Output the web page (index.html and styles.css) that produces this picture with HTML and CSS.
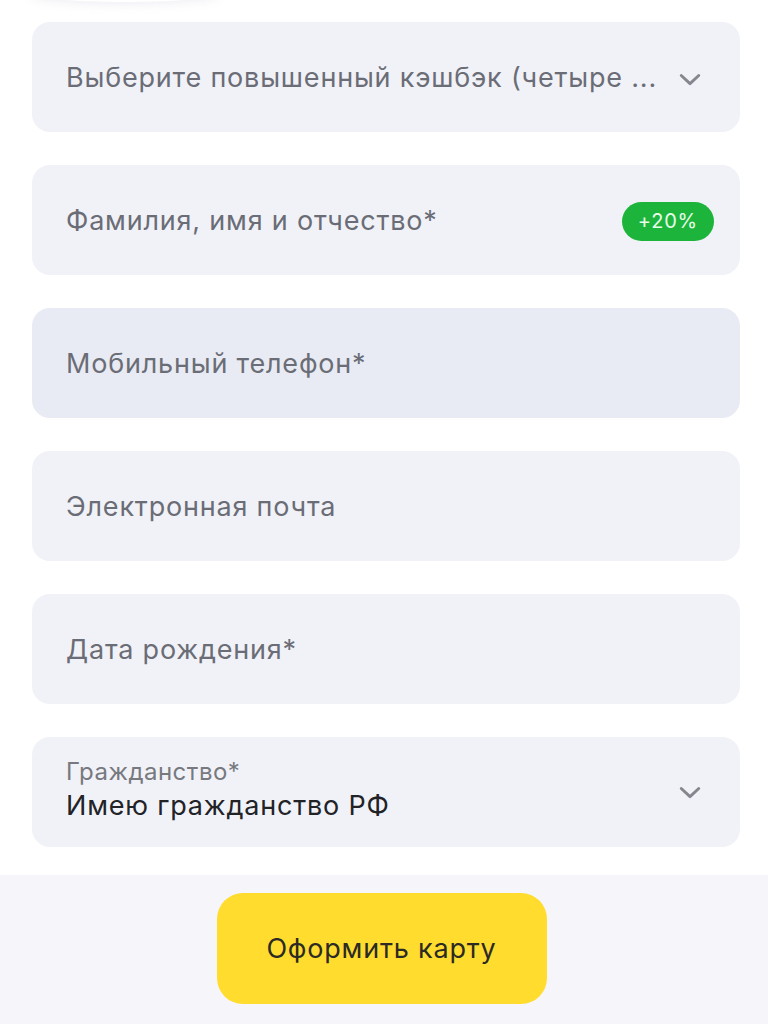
FILE: index.html
```html
<!DOCTYPE html>
<html lang="ru">
<head>
<meta charset="utf-8">
<link rel="stylesheet" href="styles.css">
</head>
<body>
<div class="page">
  <div class="top-shadow"></div>
  <form class="form">
    <div class="field">
      <span class="placeholder">Выберите повышенный кэшбэк (четыре ...</span>
      <svg class="chevron chevron-low" viewBox="0 0 24 24" width="28" height="28"><path d="M4.5 9l7.5 7 7.5-7" fill="none" stroke="#85878f" stroke-width="2.5" stroke-linecap="round" stroke-linejoin="round"/></svg>
    </div>
    <div class="field">
      <span class="placeholder">Фамилия, имя и отчество*</span>
      <span class="badge">+20%</span>
    </div>
    <div class="field field-active">
      <span class="placeholder">Мобильный телефон*</span>
    </div>
    <div class="field">
      <span class="placeholder">Электронная почта</span>
    </div>
    <div class="field">
      <span class="placeholder">Дата рождения*</span>
    </div>
    <div class="field">
      <div class="filled">
        <span class="label">Гражданство*</span>
        <span class="value">Имею гражданство РФ</span>
      </div>
      <svg class="chevron" viewBox="0 0 24 24" width="28" height="28"><path d="M4.5 9l7.5 7 7.5-7" fill="none" stroke="#85878f" stroke-width="2.5" stroke-linecap="round" stroke-linejoin="round"/></svg>
    </div>
  </form>
  <div class="footer">
    <button class="submit" type="button">Оформить карту</button>
  </div>
</div>
</body>
</html>
```

FILE: styles.css
```css
html, body {
  margin: 0;
  padding: 0;
  background: #ffffff;
}
body {
  font-family: Inter, Roboto, "Liberation Sans", sans-serif;
  width: 768px;
  height: 1024px;
  overflow: hidden;
}
.page {
  display: flex;
  flex-direction: column;
  height: 1024px;
  position: relative;
}
.top-shadow {
  position: absolute;
  left: 30px;
  top: -16px;
  width: 190px;
  height: 18px;
  border-radius: 50%;
  box-shadow: 0 3px 8px rgba(210, 205, 220, 0.3);
}
.form {
  display: flex;
  flex-direction: column;
  gap: 33px;
  padding: 22px 28px 28px 32px;
}
.field {
  height: 110px;
  box-sizing: border-box;
  background: #f1f2f8;
  border-radius: 18px;
  display: flex;
  align-items: center;
  justify-content: space-between;
  padding: 0 36px 0 34px;
  gap: 16px;
}
.field-active {
  background: #e8ebf3;
}
.placeholder {
  font-size: 27px;
  letter-spacing: 0.8px;
  color: #6b6d76;
  white-space: nowrap;
}
.chevron {
  flex: none;
}
.chevron-low {
  margin-top: 4px;
}
.badge {
  background: #1db43b;
  color: #e6ffea;
  font-size: 20px;
  letter-spacing: 0.8px;
  border-radius: 20px;
  padding: 0 16px;
  height: 39px;
  display: inline-flex;
  align-items: center;
  margin-right: -10px;
  margin-top: 2px;
}
.filled {
  display: flex;
  flex-direction: column;
  margin-top: 0;
}
.label {
  font-size: 24px;
  letter-spacing: 0.5px;
  color: #77797f;
  line-height: 28px;
}
.value {
  font-size: 27px;
  letter-spacing: 0.8px;
  color: #222327;
  line-height: 40px;
}
.footer {
  flex: 1;
  background: #f6f6fa;
  display: flex;
  justify-content: center;
  padding-top: 18px;
}
.submit {
  width: 330px;
  height: 111px;
  background: #ffdc2e;
  border: none;
  border-radius: 26px;
  font-family: Inter, Roboto, "Liberation Sans", sans-serif;
  font-size: 27px;
  letter-spacing: 0.8px;
  color: #2b2a24;
  margin-left: -5px;
}
```
